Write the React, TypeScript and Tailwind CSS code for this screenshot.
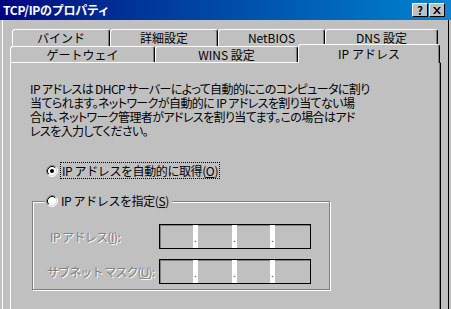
import React from 'react';

const font = "font-['Noto_Sans_CJK_JP','Noto_Sans',sans-serif]";

function Radio({ checked }: { checked?: boolean }) {
  return (
    <svg width="12" height="12" viewBox="0 0 12 12" className="shrink-0">
      <circle cx="6" cy="6" r="4.5" fill="#fff" />
      <path d="M2.11 9.89 A5.5 5.5 0 0 1 9.89 2.11" stroke="#808080" fill="none" />
      <path d="M2.82 9.18 A4.5 4.5 0 0 1 9.18 2.82" stroke="#000" fill="none" />
      <path d="M9.89 2.11 A5.5 5.5 0 0 1 2.11 9.89" stroke="#fff" fill="none" />
      <path d="M9.18 2.82 A4.5 4.5 0 0 1 2.82 9.18" stroke="#dfdfdf" fill="none" />
      {checked && <circle cx="6" cy="6" r="2" fill="#000" />}
    </svg>
  );
}

function IpBox() {
  const Dot = () => (
    <div className="flex h-full w-[5px] items-end justify-center bg-white pb-[5px] text-[10px] leading-[10px] text-[#404040]">.</div>
  );
  return (
    <div className="flex h-[25px] w-[152px] border border-black shadow-[inset_1px_1px_0_#808080]">
      <div className="w-[33px]" />
      <Dot />
      <div className="w-[34px]" />
      <Dot />
      <div className="w-[33px]" />
      <Dot />
      <div className="flex-1" />
    </div>
  );
}

const tabBase =
  'flex items-center justify-center rounded-t-[3px] border-l border-t border-white border-r border-r-black shadow-[inset_-1px_0_0_#808080] bg-[#c0c0c0] text-[12px] text-black';

const disabled = 'text-[#808080] [text-shadow:1px_1px_0_#fff]';

export default function App() {
  return (
    <div className={`flex h-[309px] w-[451px] flex-col overflow-hidden bg-[#c0c0c0] ${font}`}>
      <div className="flex h-[20px] shrink-0 items-center bg-linear-to-r from-[#000080] to-[#1084d0] pl-[3px] pr-[6px]">
        <span className="text-[12px] font-bold tracking-[-0.3px] text-white">TCP/IPのプロパティ</span>
        <div className="ml-auto flex gap-[1px]">
          <div className="flex h-[14px] w-[16px] items-center justify-center border-l border-t border-white border-r border-b border-r-black border-b-black bg-[#c0c0c0] text-[11px] font-bold leading-none text-black">?</div>
          <div className="flex h-[14px] w-[16px] items-center justify-center border-l border-t border-white border-r border-b border-r-black border-b-black bg-[#c0c0c0]">
            <svg width="8" height="7" viewBox="0 0 8 7">
              <path d="M0 0h2l2 2.5L6 0h2L5 3.5 8 7H6L4 4.5 2 7H0l3-3.5z" fill="#000" />
            </svg>
          </div>
        </div>
      </div>

      <div className="ml-[2px] mr-[2px] flex flex-1 flex-col border-l border-r border-l-white border-r-black pl-[7px] pr-[7px] pt-[9px]">
        <div className="flex h-[17px] pl-[2px]">
          <div className={`${tabBase} w-[98px]`}>バインド</div>
          <div className={`${tabBase} w-[108px]`}>詳細設定</div>
          <div className={`${tabBase} w-[107px]`}>NetBIOS</div>
          <div className={`${tabBase} w-[113px]`}>DNS 設定</div>
        </div>
        <div className="flex h-[16px] items-end">
          <div className={`${tabBase} h-[16px] w-[145px]`}>ゲートウェイ</div>
          <div className={`${tabBase} h-[16px] w-[143px]`}>WINS 設定</div>
          <div className={`${tabBase} relative z-10 -mb-px h-[19px] w-[142px] pb-[1px]`}>IP アドレス</div>
        </div>

        <div className="flex-1 border-l border-t border-white border-r border-r-black pl-[19px] pt-[19px] shadow-[inset_-1px_0_0_#808080]">
          <div className="text-[12px] leading-[14px] tracking-[-0.6px] text-black [font-feature-settings:'palt']">
            <div>IP アドレスは DHCP サーバーによって自動的にこのコンピュータに割り</div>
            <div>当てられます。ネットワークが自動的に IP アドレスを割り当てない場</div>
            <div>合は、ネットワーク管理者がアドレスを割り当てます。この場合はアド</div>
            <div>レスを入力してください。</div>
          </div>

          <div className="ml-[16px] mt-[24px] flex h-[17px] items-center gap-[2px]">
            <Radio checked />
            <div className="flex h-[17px] items-center border border-dotted border-black px-[1px] text-[12px] tracking-[-0.4px] text-black">
              IP アドレスを自動的に取得(<span className="underline">O</span>)
            </div>
          </div>

          <div className="relative ml-[2px] mt-[22px] h-[89px] w-[298px] border border-[#808080] shadow-[1px_1px_0_#fff,inset_1px_1px_0_#fff]">
            <div className="absolute left-[12px] top-[-8px] flex h-[14px] items-center gap-[3px] bg-[#c0c0c0] pl-[1px] pr-[3px] text-[12px] tracking-[-0.4px] text-black">
              <Radio />
              <span>
                IP アドレスを指定(<span className="underline">S</span>)
              </span>
            </div>

            <div className="flex flex-col gap-[10px] pl-[17px] pt-[22px]">
              <div className="flex items-center">
                <span className={`w-[109px] text-[12px] tracking-[-0.6px] ${disabled}`}>
                  IP アドレス(<span className="underline">I</span>):
                </span>
                <IpBox />
              </div>
              <div className="flex items-center">
                <span className={`-ml-[3px] w-[112px] text-[12px] tracking-[-0.9px] ${disabled}`}>
                  サブネット マスク(<span className="underline">U</span>):
                </span>
                <IpBox />
              </div>
            </div>
          </div>
        </div>
      </div>
    </div>
  );
}
